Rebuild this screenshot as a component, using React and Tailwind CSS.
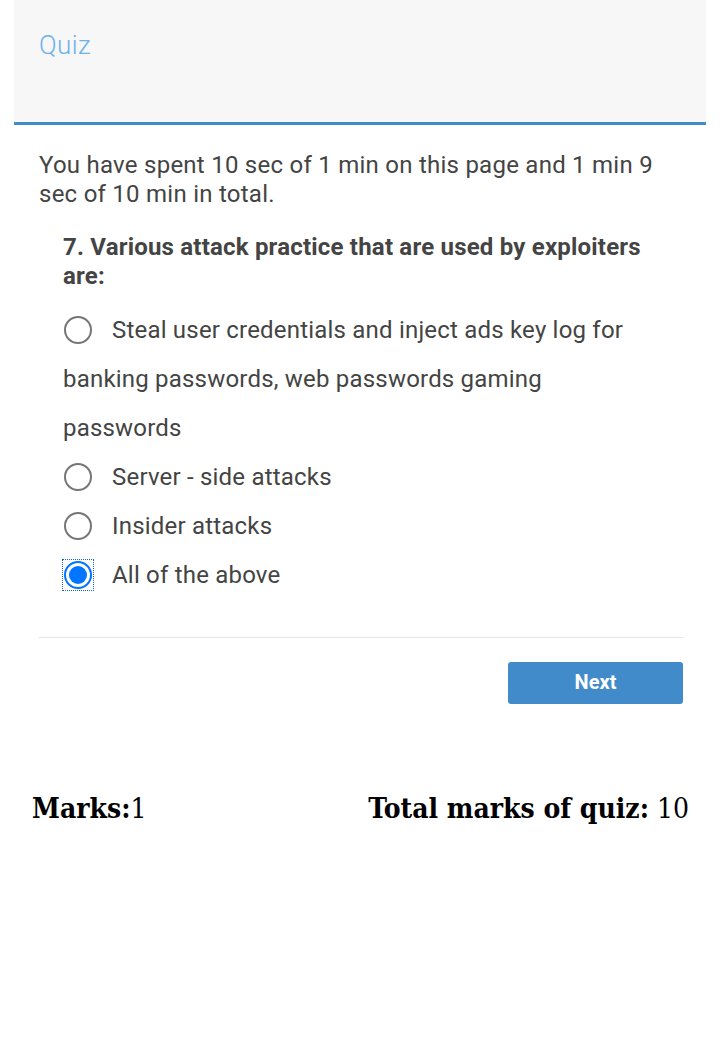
export default function App() {
  const options = [
    'Steal user credentials and inject ads key log for banking passwords, web passwords gaming passwords',
    'Server - side attacks',
    'Insider attacks',
    'All of the above',
  ];

  return (
    <div className="min-h-[1039px] bg-white font-['Roboto',sans-serif] text-[#444]">
      <div className="mx-[14px] h-[125px] border-b-[3px] border-[#428bca] bg-[#f7f7f7] px-[25px] pt-[28px]">
        <h1 className="text-[26px] font-light leading-[34px] tracking-[0.4px] text-[#6cb2eb]">Quiz</h1>
      </div>

      <div className="pl-[39px] pr-[37px] pt-[26px]">
        <p className="text-[24px] leading-[29px] tracking-[0.25px]">
          You have spent 10 sec of 1 min on this page and 1 min 9 sec of 10 min in total.
        </p>

        <div className="px-[24px] pt-[24px]">
          <p className="text-[24px] font-bold leading-[29px] tracking-[0.2px]">
            7. Various attack practice that are used by exploiters are:
          </p>
          <div className="pt-[15px]">
            {options.map((opt, i) => {
              const checked = i === 3;
              return (
                <label key={i} className="block text-[24px] leading-[49px] tracking-[0.2px]">
                  <span
                    className={`mr-[19px] inline-flex h-[30px] w-[30px] translate-y-[-2px] items-center justify-center align-middle ${
                      checked ? 'outline-1 outline-dotted outline-[#1a5fd0]' : ''
                    }`}
                  >
                    <span
                      className={`block h-[28px] w-[28px] rounded-full border-[2px] bg-white ${
                        checked ? 'border-[#0075ff] p-[3px]' : 'border-[#767676]'
                      }`}
                    >
                      {checked && <span className="block h-full w-full rounded-full bg-[#0075ff]" />}
                    </span>
                  </span>
                  {opt}
                </label>
              );
            })}
          </div>
        </div>

        <div className="mt-[37px] border-t border-[#e5e5e5] pt-[24px]">
          <div className="flex justify-end">
            <button className="h-[42px] w-[175px] rounded-[3px] bg-[#428bca] pb-[3px] text-[20px] font-bold text-white">
              Next
            </button>
          </div>
        </div>
      </div>

      <div className="flex justify-between pl-[32px] pr-[31px] pt-[84px] font-['DejaVu_Serif',serif] font-stretch-condensed text-[28px] text-black">
        <div>
          <b>Marks:</b>1
        </div>
        <div>
          <b>Total marks of quiz:</b> 10
        </div>
      </div>
    </div>
  );
}
